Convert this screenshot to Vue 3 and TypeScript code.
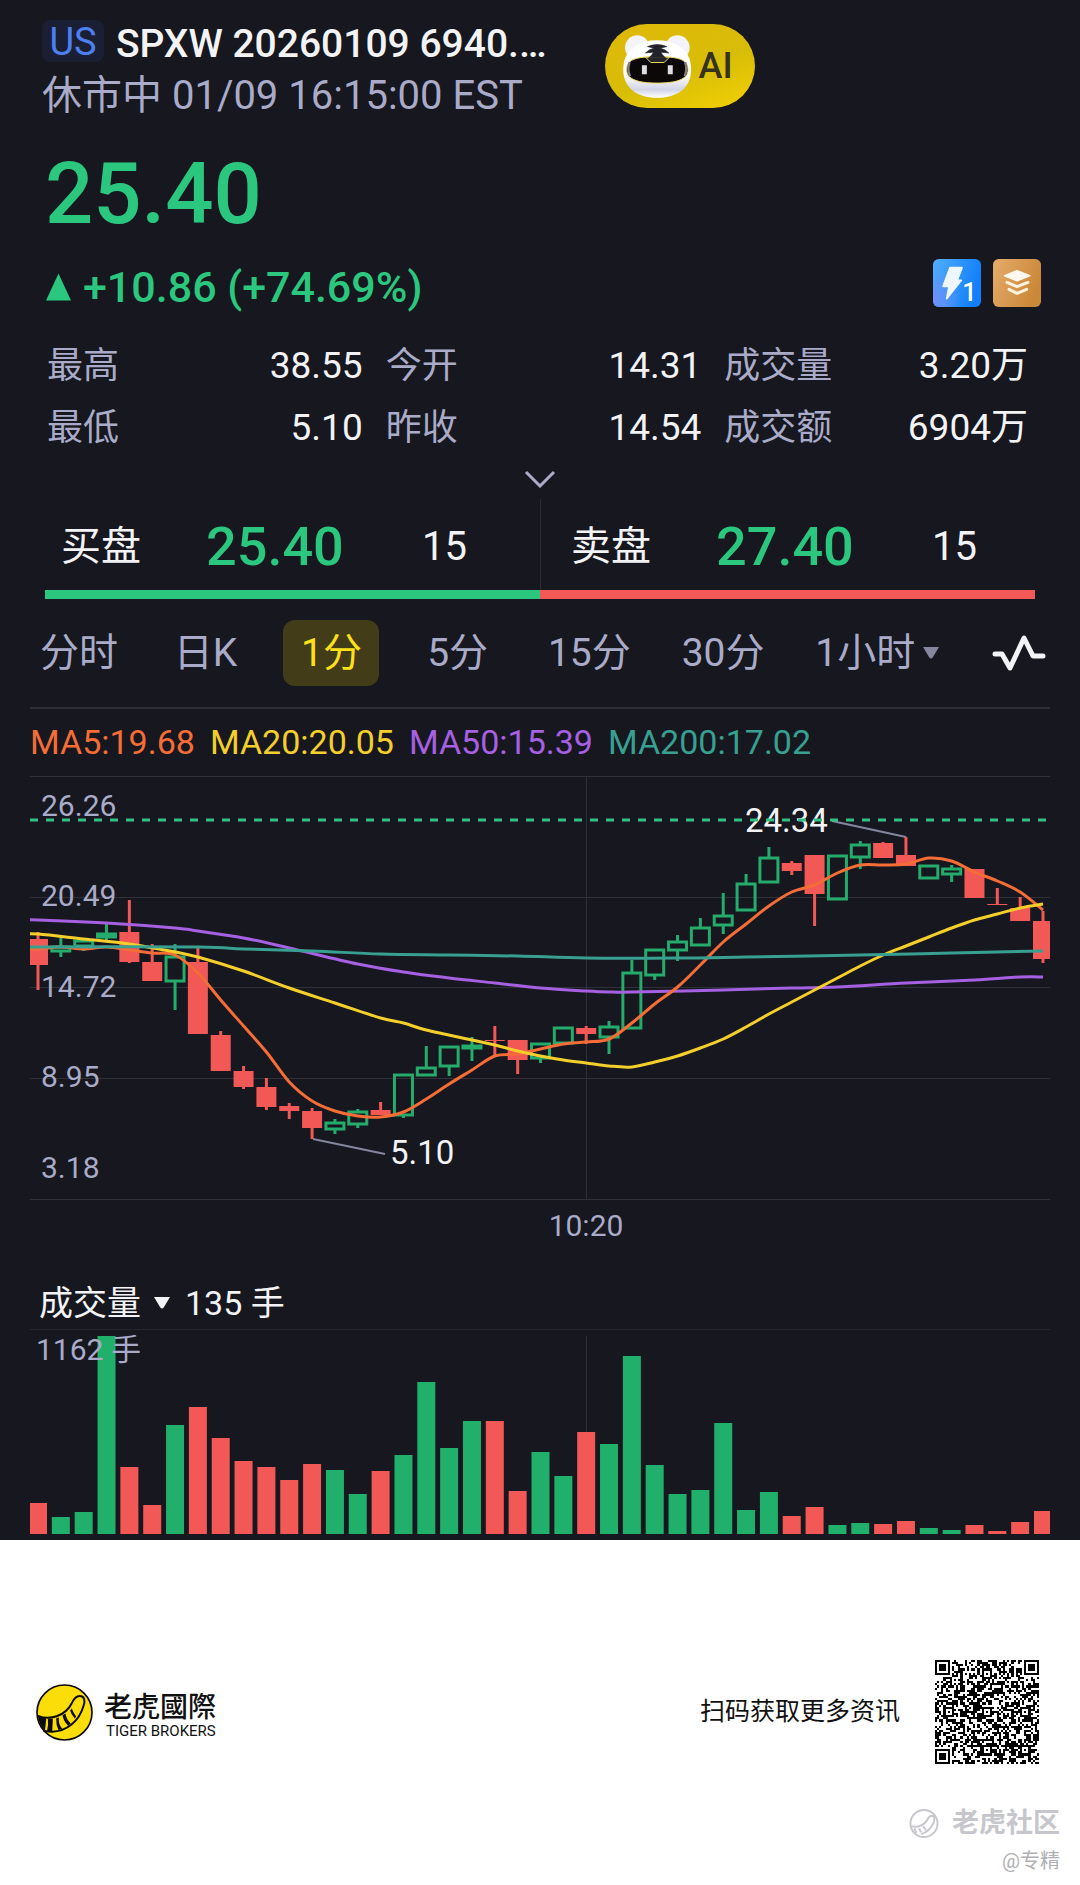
<script setup lang="ts">
type Side = 'up' | 'down'

interface Candle {
  side: Side
  high: number
  top: number
  bottom: number
  low: number
  volume: number
}

interface Quote {
  label: string
  value: string
}

const quotes: Quote[] = [
  { label: '最高', value: '38.55' },
  { label: '今开', value: '14.31' },
  { label: '成交量', value: '3.20万' },
  { label: '最低', value: '5.10' },
  { label: '昨收', value: '14.54' },
  { label: '成交额', value: '6904万' },
]

const book = [
  { label: '买盘', price: '25.40', size: '15' },
  { label: '卖盘', price: '27.40', size: '15' },
]

const periods = ['分时', '日K', '1分', '5分', '15分', '30分']
const activePeriod = '1分'

const averages = [
  { name: 'MA5:19.68', tone: 'ma5' },
  { name: 'MA20:20.05', tone: 'ma20' },
  { name: 'MA50:15.39', tone: 'ma50' },
  { name: 'MA200:17.02', tone: 'ma200' },
]

// side, high, body top, body bottom, low, volume bar height
const rows: [number, number, number, number, number, number][] = [
  [0, 156, 163, 189, 214, 31], [1, 161, 170, 176, 181, 17], [1, 162, 164, 171, 175, 22],
  [1, 148, 157, 162, 165, 198], [0, 124, 156, 186, 187, 67], [0, 168, 186, 205, 205, 29],
  [1, 168, 180, 206, 234, 109], [0, 171, 186, 258, 258, 127], [0, 255, 259, 295, 295, 96],
  [0, 290, 295, 311, 313, 73], [0, 302, 311, 331, 334, 67], [0, 327, 330, 335, 343, 54],
  [0, 332, 335, 352, 363, 70], [1, 343, 346, 354, 358, 64], [1, 333, 335, 349, 352, 40],
  [0, 326, 334, 339, 339, 63], [1, 298, 298, 340, 342, 79], [1, 270, 291, 300, 300, 152],
  [1, 270, 270, 291, 300, 86], [1, 261, 269, 273, 285, 113], [0, 250, 264, 265, 279, 113],
  [0, 264, 264, 284, 298, 43], [1, 267, 267, 283, 287, 82], [1, 251, 251, 268, 268, 58],
  [0, 250, 252, 258, 268, 102], [1, 245, 250, 262, 278, 90], [1, 184, 196, 253, 253, 178],
  [1, 173, 173, 200, 204, 69], [1, 159, 165, 175, 185, 40], [1, 142, 151, 170, 170, 44],
  [1, 117, 139, 150, 158, 111], [1, 98, 107, 135, 135, 24], [1, 71, 81, 107, 107, 42],
  [0, 85, 87, 95, 99, 18], [0, 79, 79, 118, 150, 27], [1, 79, 79, 124, 124, 9],
  [1, 65, 68, 82, 93, 11], [0, 66, 67, 82, 82, 10], [0, 61, 79, 90, 90, 13],
  [1, 89, 89, 103, 103, 6], [1, 89, 92, 99, 106, 4], [0, 93, 93, 122, 122, 9],
  [0, 112, 128, 129, 129, 3], [0, 121, 132, 145, 145, 12], [0, 135, 145, 183, 187, 23],
]

const candles: Candle[] = rows.map(([up, high, top, bottom, low, volume]) => ({
  side: up ? 'up' : 'down',
  high,
  top,
  bottom,
  low,
  volume,
}))

const centre = (i: number): number => 8 + (i * 1005) / 44

const lines: { tone: string; points: [number, number][] }[] = [
  {
    tone: 'ma50',
    points: [[0, 144], [3, 147], [6, 152], [7, 155], [9, 162], [11, 172], [14, 188], [16, 196], [18, 202],
      [20, 207], [22, 212], [24, 215], [25, 216], [26, 216], [30, 214], [33, 212], [35, 211], [38, 207],
      [41, 204], [43, 201], [44, 201]],
  },
  {
    tone: 'ma5',
    points: [[0, 173], [1, 171], [2, 173], [3, 171], [4, 174], [5, 177], [6, 179], [7, 197], [8, 224],
      [9, 250], [10, 276], [11, 306], [12, 325], [13, 335], [14, 340], [15, 341], [16, 336], [17, 323],
      [18, 308], [19, 294], [20, 280], [21, 278], [22, 273], [23, 268], [24, 266], [25, 263], [26, 247],
      [27, 228], [28, 211], [29, 189], [30, 166], [31, 148], [32, 130], [33, 116], [34, 109], [35, 97],
      [36, 89], [37, 89], [38, 88], [39, 82], [40, 85], [41, 96], [42, 105], [43, 116], [44, 134]],
  },
  {
    tone: 'ma20',
    points: [[0, 158], [2, 163], [4, 168], [6, 176], [7, 181], [9, 195], [11, 212], [13, 227], [15, 242],
      [16, 247], [17, 254], [19, 264], [20, 269], [21, 275], [22, 280], [23, 284], [24, 287], [25, 290],
      [26, 291], [27, 286], [28, 280], [29, 272], [30, 263], [31, 251], [32, 238], [33, 226], [34, 214],
      [35, 202], [36, 190], [37, 179], [38, 170], [39, 161], [40, 152], [41, 144], [42, 138], [43, 132],
      [44, 128]],
  },
  {
    tone: 'ma200',
    points: [[0, 171], [7, 171], [9, 173], [12, 175], [15, 178], [18, 179], [21, 180], [24, 182], [28, 182],
      [31, 181], [36, 179], [40, 177], [44, 175]],
  },
]

// Catmull-Rom curve through the points, led in from the left edge of the plot
function toPath(points: [number, number][]): string {
  const p = [[-1, points[0][1]], ...points].map(([i, y]) => [centre(i), y])
  let d = `M${p[0][0]} ${p[0][1]}`
  for (let i = 0; i < p.length - 1; i++) {
    const a = p[Math.max(i - 1, 0)]
    const b = p[i]
    const c = p[i + 1]
    const e = p[Math.min(i + 2, p.length - 1)]
    d += `C${b[0] + (c[0] - a[0]) / 6} ${b[1] + (c[1] - a[1]) / 6} `
    d += `${c[0] - (e[0] - b[0]) / 6} ${c[1] - (e[1] - b[1]) / 6} ${c[0]} ${c[1]}`
  }
  return d
}

const priceLabels = [
  { text: '26.26', y: 40 },
  { text: '20.49', y: 130 },
  { text: '14.72', y: 221 },
  { text: '8.95', y: 311 },
  { text: '3.18', y: 402 },
]
const gridRows = [0, 121, 211, 302, 423]

// 49-module code: finder, alignment and timing patterns around a seeded fill
const MODULES = 49
function moduleOn(x: number, y: number, noise: boolean): boolean {
  const corners = [[3, 3], [MODULES - 4, 3], [3, MODULES - 4]]
  for (const [cx, cy] of corners) {
    const d = Math.max(Math.abs(x - cx), Math.abs(y - cy))
    if (d <= 4) return d <= 1 || d === 3
  }
  const marks = [[24, 6], [6, 24], [24, 24], [42, 24], [24, 42], [42, 42]]
  for (const [cx, cy] of marks) {
    const d = Math.max(Math.abs(x - cx), Math.abs(y - cy))
    if (d <= 2) return d !== 1
  }
  if (x === 6 || y === 6) return (x + y) % 2 === 0
  return noise
}
let seed = 20260109
let qrPath = ''
for (let y = 0; y < MODULES; y++) {
  for (let x = 0; x < MODULES; x++) {
    seed = (Math.imul(seed, 1664525) + 1013904223) >>> 0
    if (moduleOn(x, y, seed / 4294967296 < 0.52)) qrPath += `M${x} ${y}h1v1h-1z`
  }
}
</script>

<template>
  <div class="page">
    <main class="quote">
      <header class="head">
        <div class="ident">
          <div class="name-row">
            <span class="market">US</span>
            <h1 class="name">SPXW 20260109 6940.…</h1>
          </div>
          <p class="status">休市中 01/09 16:15:00 EST</p>
        </div>
        <button class="ai" type="button">
          <svg class="ai-face" viewBox="180 105 214 194" aria-hidden="true">
            <defs>
              <linearGradient id="face" x1="0" y1="0" x2="0" y2="1">
                <stop offset="0.6" stop-color="#fff" />
                <stop offset="0.86" stop-color="#d3d4e6" />
                <stop offset="1" stop-color="#fff" />
              </linearGradient>
            </defs>
            <circle cx="226" cy="145" r="37" fill="#f4f3fa" />
            <circle cx="347" cy="145" r="37" fill="#f4f3fa" />
            <path d="M286 123c50 0 84 22 97 55 18 58-9 118-97 118s-115-60-97-118c13-33 47-55 97-55z" fill="url(#face)" />
            <path d="M194 212c0-28 22-35 52-38 26-2 54-2 80 0 30 3 53 10 53 38 0 30-38 40-93 40s-92-10-92-40z" fill="#0b0807" stroke="#f0dc5c" stroke-width="3" />
            <path d="M203 189q-8 22 1 42M370 189q8 22-1 42" fill="none" stroke="#817a86" stroke-width="7" />
            <path d="M251 174h72l-16 16h-40z" fill="#24242a" stroke="#f0dc5c" stroke-width="3" />
            <path d="M257 142q29-12 58 0l-20 5q14 2 26 14l-24-2q4 8 14 17h-50q10-9 14-17l-24 2q12-12 26-14z" fill="#22232a" stroke="#22232a" stroke-width="2" />
            <path d="M240 198h15v27h-15zM318 198h15v27h-15z" fill="#dedde4" />
          </svg>
          <span>AI</span>
        </button>
      </header>

      <p class="price">25.40</p>
      <div class="change-row">
        <p class="change">
          <svg class="rise" viewBox="0 0 26 28" aria-hidden="true"><path d="M13 0l13 28H0z" fill="currentColor" /></svg>
          +10.86 (+74.69%)
        </p>
        <div class="badges">
          <svg viewBox="0 0 144 144" role="img" aria-label="Level 1">
            <defs>
              <linearGradient id="lv" x1="0" y1="0" x2="1" y2="0.3">
                <stop offset="0" stop-color="#53adfa" />
                <stop offset="1" stop-color="#1280fa" />
              </linearGradient>
              <radialGradient id="lv2" cx="0" cy="0.85" r="0.6">
                <stop offset="0" stop-color="#6f90fa" />
                <stop offset="1" stop-color="#6f90fa" stop-opacity="0" />
              </radialGradient>
            </defs>
            <rect width="144" height="144" rx="17" fill="url(#lv)" />
            <rect width="144" height="144" rx="17" fill="url(#lv2)" />
            <path d="M51 26h36L73 64h12L41 119l7-37H30z" fill="#eef6ff" stroke="#eef6ff" stroke-width="5" stroke-linejoin="round" />
            <text x="88" y="126" class="lv-text">1</text>
          </svg>
          <svg viewBox="0 0 144 144" role="img" aria-label="Depth">
            <defs>
              <linearGradient id="dp" x1="0" y1="0" x2="1" y2="0.4">
                <stop offset="0" stop-color="#e6ac6d" />
                <stop offset="1" stop-color="#cb8838" />
              </linearGradient>
            </defs>
            <rect width="144" height="144" rx="17" fill="url(#dp)" />
            <path d="M35 50l37-15 38 15-38 15z" fill="#fff8ee" stroke="#fff8ee" stroke-width="5" stroke-linejoin="round" />
            <path d="M42 70l30 13 33-13M48 91l24 12 29-12" fill="none" stroke="#fff3e2" stroke-width="9" stroke-linecap="round" stroke-linejoin="round" />
          </svg>
        </div>
      </div>

      <dl class="stats">
        <div v-for="q in quotes" :key="q.label" class="stat">
          <dt>{{ q.label }}</dt>
          <dd>{{ q.value }}</dd>
        </div>
      </dl>

      <button class="expand" type="button" aria-label="展开">
        <svg viewBox="0 0 32 18" aria-hidden="true"><path d="M2 2l14 14L30 2" fill="none" stroke="#a9abc8" stroke-width="3" /></svg>
      </button>

      <section class="book">
        <div v-for="b in book" :key="b.label" class="side">
          <span class="side-label">{{ b.label }}</span>
          <span class="side-price">{{ b.price }}</span>
          <span class="side-size">{{ b.size }}</span>
        </div>
      </section>
      <div class="ratio"><i class="buy"></i><i class="sell"></i></div>

      <nav class="periods">
        <button v-for="p in periods" :key="p" type="button" :class="['period', { active: p === activePeriod }]">{{ p }}</button>
        <button type="button" class="period">
          1小时<svg class="caret" viewBox="0 0 16 12" aria-hidden="true"><path d="M0 0h16l-6 10q-2 3-4 0z" fill="#8586a0" /></svg>
        </button>
        <button type="button" class="period" aria-label="指标">
          <svg class="wave" viewBox="0 0 54 36" aria-hidden="true">
            <path d="M3 19h7l8 14L32 3l9 18h10" fill="none" stroke="#f3f3f6" stroke-width="5" stroke-linecap="round" stroke-linejoin="round" />
          </svg>
        </button>
      </nav>

      <section class="charts">
        <div class="legend">
          <span v-for="a in averages" :key="a.name" :class="a.tone">{{ a.name }}</span>
        </div>

        <svg class="plot" viewBox="0 0 1020 480" role="img" aria-label="K线">
          <path v-for="y in gridRows" :key="y" class="grid" :d="`M0 ${y}h1020v1H0z`" />
          <path class="grid" d="M556 0h1v424h-1z" />
          <text v-for="l in priceLabels" :key="l.text" class="axis" x="11" :y="l.y">{{ l.text }}</text>
          <text class="mark" x="715" y="56">24.34</text>
          <text class="mark" x="360" y="388">5.10</text>
          <path class="leader" d="M802 45L876 61M283 363l72 15" />
          <g v-for="(c, i) in candles" :key="i" :class="c.side">
            <template v-if="c.side === 'up'">
              <path class="wick" :d="`M${centre(i)} ${c.high}V${c.top}M${centre(i)} ${c.bottom}V${c.low}`" />
              <rect class="hollow" :x="centre(i) - 9" :y="c.top + 1" width="18" :height="Math.max(c.bottom - c.top - 2, 1)" />
            </template>
            <template v-else>
              <path class="wick" :d="`M${centre(i)} ${c.high}V${c.low}`" />
              <rect class="solid" :x="centre(i) - 10" :y="c.top" width="20" :height="c.bottom - c.top" />
            </template>
          </g>
          <path v-for="l in lines" :key="l.tone" :class="['average', l.tone]" :d="toPath(l.points)" />
          <path class="last" d="M0 44H1020" />
          <text class="axis" x="556" y="460" text-anchor="middle">10:20</text>
        </svg>

        <div class="volume-head">
          <button type="button" class="volume-pick">
            成交量<svg class="caret light" viewBox="0 0 16 12" aria-hidden="true"><path d="M0 0h16l-6 10q-2 3-4 0z" fill="#f3f3f6" /></svg>
          </button>
          <span>135 手</span>
        </div>
        <svg class="plot" viewBox="0 0 1020 210" role="img" aria-label="成交量">
          <path class="grid" d="M556 6h1v198h-1z" />
          <rect v-for="(c, i) in candles" :key="i" :class="['bar', c.side]" :x="centre(i) - 9" :y="204 - c.volume" width="18" :height="c.volume" />
          <text class="axis" x="6" y="30">1162 手</text>
        </svg>
      </section>
    </main>

    <footer class="foot">
      <div class="foot-row">
        <div class="brand">
          <svg class="logo" viewBox="0 0 172 172" aria-hidden="true">
            <circle cx="86" cy="86" r="83" fill="#fbdd0a" stroke="#0c0a04" stroke-width="5" />
            <path d="M6 96C40 110 88 98 108 58c6-14 13-22 24-22 13 0 17 12 12 28-14 50-52 78-96 80-12 0-20-1-26-4" fill="none" stroke="#0c0a04" stroke-width="6" />
            <path d="M5 94l26 10-4 37q-18-18-22-47zM36 104l15 1-2 38-16 1q5-20 3-40zM61 103l8-2q-2 20 10 34l-11 4q-8-16-7-36zM80 94l9-5q2 18 16 30l-8 7q-14-14-17-32zM103 80l5-6q4 12 13 24l-4 6q-11-12-14-24z" fill="#0c0a04" />
          </svg>
          <div class="brand-text">
            <p class="brand-cn">老虎國際</p>
            <p class="brand-en">TIGER BROKERS</p>
          </div>
        </div>
        <div class="scan">
          <p>扫码获取更多资讯</p>
          <svg class="qr" viewBox="0 0 49 49" role="img" aria-label="二维码"><path :d="qrPath" fill="#000" shape-rendering="crispEdges" /></svg>
        </div>
      </div>
      <div class="community">
        <svg viewBox="0 0 32 32" aria-hidden="true">
          <circle cx="16" cy="16" r="14" fill="none" stroke="#c6c6cc" stroke-width="2" />
          <path d="M3 19q10 2 16-6 2-5 6-5 3 1 1 7-4 9-13 12" fill="none" stroke="#c6c6cc" stroke-width="2" />
          <path d="M6 21l2 5M11 21l2 4M15 19l3 4" stroke="#c6c6cc" stroke-width="2" />
        </svg>
        <span>老虎社区</span>
      </div>
      <p class="author">@专精</p>
    </footer>
  </div>
</template>

<style>
body {
  margin: 0;
  background: #fff;
}
</style>

<style scoped>
.page {
  font-family: Roboto, "Noto Sans CJK SC", sans-serif;
  color: #f3f3f6;
}
p,
h1,
dl,
dd {
  margin: 0;
}
button {
  margin: 0;
  padding: 0;
  border: 0;
  background: none;
  color: inherit;
  font: inherit;
}
svg {
  display: block;
}
.quote {
  background: #16171f;
}
.head {
  display: flex;
  align-items: flex-start;
  gap: 58px;
  padding: 20px 42px 0;
}
.name-row {
  display: flex;
  gap: 12px;
}
.market {
  box-sizing: border-box;
  width: 62px;
  height: 42px;
  border-radius: 8px;
  background: #1a1f33;
  color: #4c7ff0;
  font-size: 38px;
  line-height: 44px;
  text-align: center;
}
.name {
  font-size: 39px;
  font-weight: 500;
  line-height: 48px;
  white-space: nowrap;
}
.status {
  color: #a9abc8;
  font-size: 40px;
  line-height: 56px;
  white-space: nowrap;
}
.ai {
  display: flex;
  align-items: center;
  gap: 6px;
  box-sizing: border-box;
  width: 150px;
  height: 84px;
  margin-top: 4px;
  padding-left: 17px;
  border-radius: 42px;
  background: linear-gradient(160deg, #dfb908 10%, #d8bd08 55%, #f2d104 100%);
  color: #36321c;
  font-size: 36px;
  font-weight: 500;
}
.ai-face {
  width: 71px;
  height: 65px;
}
.price {
  margin-top: 20px;
  padding: 0 45px;
  color: #2cc77e;
  font-size: 85px;
  font-weight: 500;
  line-height: 100px;
}
.change-row {
  display: flex;
  align-items: flex-start;
  justify-content: space-between;
  margin-top: 15px;
  padding: 0 39px 0 46px;
}
.change {
  display: flex;
  align-items: center;
  gap: 12px;
  color: #2cc77e;
  font-size: 43px;
  font-weight: 500;
  line-height: 56px;
}
.rise {
  width: 25px;
  height: 28px;
}
.badges {
  display: flex;
  gap: 12px;
}
.badges svg {
  width: 48px;
  height: 48px;
}
.lv-text {
  fill: #fff;
  font-size: 76px;
  font-weight: 500;
}
.stats {
  display: grid;
  grid-template-columns: 315fr 315fr 303fr;
  gap: 0 23px;
  margin-top: 20px;
  padding: 0 52px 0 47px;
}
.stat {
  display: flex;
  justify-content: space-between;
  line-height: 62px;
}
.stat dt {
  color: #a9abc8;
  font-size: 36px;
}
.stat dd {
  font-size: 37px;
}
.expand {
  display: flex;
  align-items: center;
  justify-content: center;
  width: 100%;
  height: 40px;
}
.expand svg {
  width: 32px;
  height: 18px;
}
.book {
  display: grid;
  grid-template-columns: 1fr 1fr;
  margin: 0 45px;
}
.side {
  display: grid;
  grid-template-columns: 145px 216px 1fr;
  align-items: center;
  box-sizing: border-box;
  height: 91px;
  padding: 4px 0 0 16px;
  line-height: 56px;
}
.side + .side {
  padding-left: 30px;
  border-left: 1px solid #2b2c34;
}
.side-label,
.side-size {
  font-size: 40px;
}
.side-price {
  color: #2cc77e;
  font-size: 54px;
  font-weight: 500;
}
.ratio {
  display: flex;
  height: 9px;
  margin: 0 45px;
}
.ratio i {
  flex: 1;
}
.buy {
  background: #2cc77e;
}
.sell {
  background: #f25856;
}
.periods {
  display: grid;
  grid-template-columns: 134fr 110fr 144fr 121fr 134fr 134fr 177fr 52fr;
  margin: 0 30px;
  padding: 21px 4px 21px 10px;
  border-bottom: 2px solid #2e2f35;
}
.period {
  display: flex;
  align-items: center;
  height: 66px;
  color: #a9abc8;
  font-size: 39px;
  line-height: 66px;
  white-space: nowrap;
}
.period.active {
  justify-content: center;
  width: 96px;
  border-radius: 12px;
  background: #433c18;
  color: #fde019;
}
.caret {
  flex: none;
  width: 16px;
  height: 12px;
  margin-left: 8px;
}
.wave {
  width: 54px;
  height: 36px;
}
.charts {
  margin: 0 30px;
}
.legend {
  display: flex;
  gap: 15px;
  font-size: 34px;
  line-height: 67px;
  white-space: nowrap;
}
.ma5 {
  color: #f46d36;
}
.ma20 {
  color: #f4cf2c;
}
.ma50 {
  color: #a660e2;
}
.ma200 {
  color: #38a091;
}
.plot {
  width: 100%;
  height: auto;
  overflow: hidden;
}
.grid {
  fill: #303138;
}
.axis {
  fill: #a9abc8;
  font-size: 30px;
}
.mark {
  fill: #f3f3f6;
  font-size: 33px;
}
.leader {
  fill: none;
  stroke: #8486a0;
  stroke-width: 2;
}
.wick {
  fill: none;
  stroke-width: 3;
}
.up .wick,
.hollow {
  stroke: #25ab6c;
}
.down .wick {
  stroke: #f25856;
}
.hollow {
  fill: none;
  stroke-width: 3;
}
.solid,
.bar.down {
  fill: #f25856;
}
.bar.up {
  fill: #20b06c;
}
.average {
  fill: none;
  stroke: currentColor;
  stroke-width: 3;
  stroke-linejoin: round;
}
.last {
  stroke: #35bf82;
  stroke-width: 3;
  stroke-dasharray: 8 8;
}
.volume-head {
  display: flex;
  gap: 15px;
  padding: 24px 9px 3px;
  border-bottom: 1px solid #26272e;
  font-size: 34px;
  line-height: 46px;
}
.volume-pick {
  display: flex;
  align-items: center;
}
.caret.light {
  margin-left: 13px;
}
.foot {
  padding: 120px 20px 10px 36px;
  background: #fff;
  color: #111;
}
.foot-row {
  display: flex;
  align-items: center;
  justify-content: space-between;
  padding-right: 21px;
}
.brand {
  display: flex;
  align-items: center;
  gap: 11px;
}
.logo {
  width: 57px;
  height: 57px;
}
.brand-text {
  padding-top: 6px;
}
.brand-cn {
  font-family: Roboto, "Noto Sans CJK TC", sans-serif;
  font-size: 28px;
  font-weight: 500;
  line-height: 32px;
}
.brand-en {
  padding-left: 2px;
  font-size: 15px;
  line-height: 14px;
}
.scan {
  display: flex;
  align-items: center;
  gap: 35px;
  font-size: 25px;
  line-height: 32px;
}
.qr {
  width: 104px;
  height: 104px;
}
.community {
  display: flex;
  align-items: center;
  justify-content: flex-end;
  gap: 12px;
  margin-top: 44px;
  color: #c6c6cc;
  font-size: 27px;
  font-weight: 700;
  line-height: 31px;
}
.community svg {
  width: 32px;
  height: 31px;
}
.author {
  margin-top: 8px;
  color: #b0b0b4;
  font-size: 20px;
  line-height: 28px;
  text-align: right;
}
</style>
